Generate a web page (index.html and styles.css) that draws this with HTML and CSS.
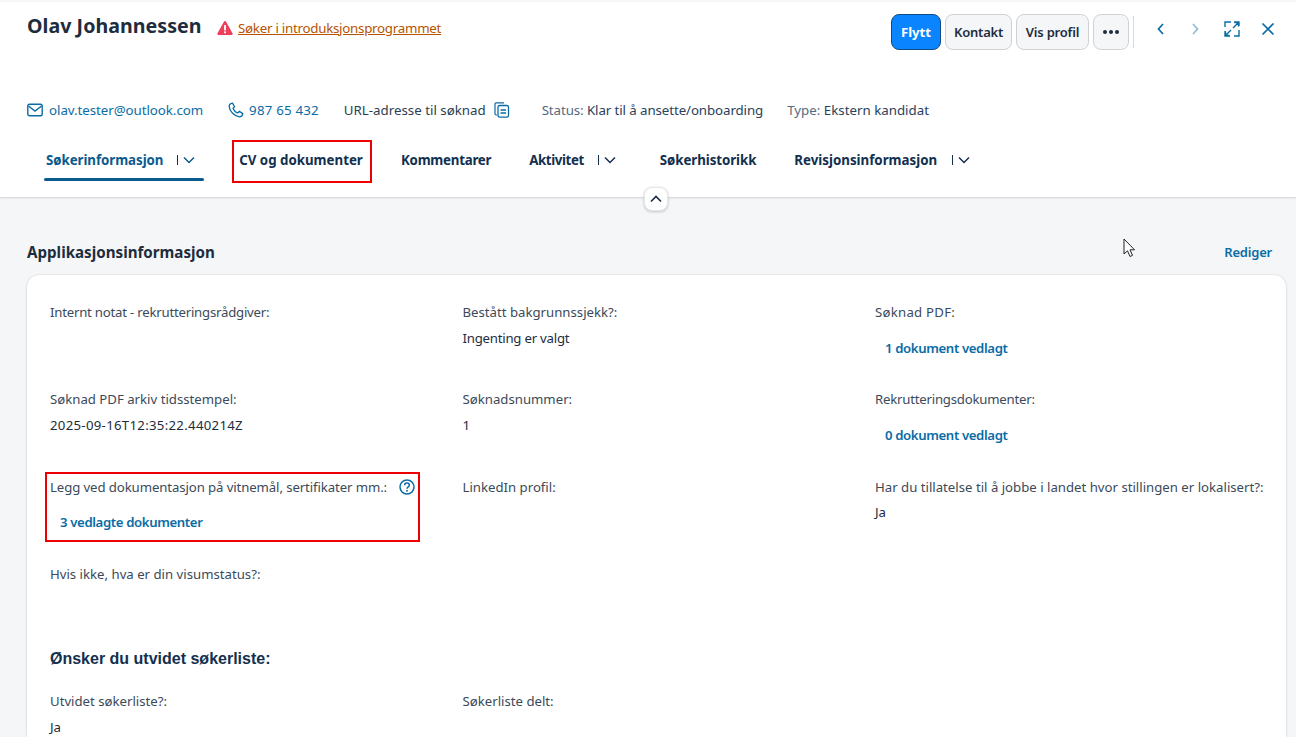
FILE: index.html
```html
<!DOCTYPE html>
<html lang="no">
<head>
<meta charset="utf-8">
<title>Olav Johannessen</title>
<link rel="stylesheet" href="styles.css">
</head>
<body>
<header class="header">
  <div class="title-row">
    <div class="title-left">
      <h1 class="name">Olav Johannessen</h1>
      <svg class="warn" viewBox="0 0 16 16" width="16" height="16"><path d="M8 1 C7.5 1 7.1 1.3 6.9 1.7 L.5 13.2 C.1 14 .6 15 1.6 15 H14.4 C15.4 15 15.9 14 15.5 13.2 L9.1 1.7 C8.9 1.3 8.5 1 8 1Z" fill="#ee3f5a"/><rect x="7.1" y="5" width="1.8" height="5.4" fill="#fff"/><rect x="7.1" y="11.4" width="1.8" height="1.8" fill="#fff"/></svg>
      <a class="warn-link">Søker i introduksjonsprogrammet</a>
    </div>
    <div class="actions">
      <button class="btn btn-primary">Flytt</button>
      <button class="btn btn-contact">Kontakt</button>
      <button class="btn btn-profile">Vis profil</button>
      <button class="btn btn-more"><span></span><span></span><span></span></button>
      <div class="sep"></div>
      <div class="nav-icons">
        <svg class="ic" viewBox="0 0 16 16"><path d="M10 3 L5.5 8 L10 13" fill="none" stroke="#0a6ca6" stroke-width="1.7"/></svg>
        <svg class="ic ic-dim" viewBox="0 0 16 16"><path d="M6 3 L10.5 8 L6 13" fill="none" stroke="#0a6ca6" stroke-width="1.7"/></svg>
        <svg class="ic ic-expand" viewBox="0 0 16 16"><path d="M1 6 V1 H7 M10 1 H15 V5 M15 9 V15 H10 M1 10 V15 H6 M9 7 L14.5 1.5 M10.5 1.5 H14.5 V5.5 M7 9 L1.5 14.500 M1.500 10.500 V14.500 H5.500" fill="none" stroke="#0a6ca6" stroke-width="1.4"/></svg>
        <svg class="ic ic-close" viewBox="0 0 16 16"><path d="M2.500 2.500 L13.500 13.500 M13.500 2.500 L2.500 13.500" fill="none" stroke="#0a6ca6" stroke-width="1.7"/></svg>
      </div>
    </div>
  </div>
  <div class="meta-row">
    <svg class="meta-ic" viewBox="0 0 16 16" width="16" height="16"><rect x=".8" y="2.300" width="14.400" height="11.400" rx="1.800" fill="none" stroke="#0a6ca6" stroke-width="1.400"/><path d="M1.500 4 L8 9 L14.500 4" fill="none" stroke="#0a6ca6" stroke-width="1.400"/></svg>
    <a class="meta-link email">olav.tester@outlook.com</a>
    <svg class="meta-ic" viewBox="0 0 16 16" width="16" height="16"><path d="M4.500 1.200 L6.500 4.600 L5 6.300 C5.600 8 7.600 10.200 9.600 11 L11.400 9.400 L14.800 11.600 C14.500 13.500 13 14.900 11.300 14.800 C6.500 14.300 1.600 9.400 1.200 4.600 C1.100 3 2.600 1.500 4.500 1.200Z" fill="none" stroke="#0a6ca6" stroke-width="1.300"/></svg>
    <a class="meta-link phone">987 65 432</a>
    <span class="meta-text url">URL-adresse til søknad</span>
    <svg class="meta-ic copy" viewBox="0 0 16 16" width="16" height="16"><path d="M3 13 H2.200 C1.500 13 1 12.500 1 11.800 V2 C1 1.300 1.500 .8 2.200 .8 H10" fill="none" stroke="#0a6ca6" stroke-width="1.200"/><rect x="4" y="3.500" width="10.500" height="11.700" rx="1.800" fill="none" stroke="#0a6ca6" stroke-width="1.300"/><path d="M6.500 8 H12 M6.500 11 H12" stroke="#0a6ca6" stroke-width="1.300"/></svg>
    <span class="meta-pair status"><span class="meta-key">Status:</span> Klar til å ansette/onboarding</span>
    <span class="meta-pair"><span class="meta-key">Type:</span> Ekstern kandidat</span>
  </div>
  <nav class="tabs">
    <div class="tab tab-active tab-first">Søkerinformasjon<i class="bar"></i><svg class="chev" viewBox="0 0 12 8"><path d="M1 1.500 L6 6.500 L11 1.500" fill="none" stroke="currentColor" stroke-width="1.500"/></svg></div>
    <div class="tab tab-marked">CV og dokumenter</div>
    <div class="tab tab-komm">Kommentarer</div>
    <div class="tab tab-akt"><span class="akt-text">Aktivitet</span><i class="bar"></i><svg class="chev" viewBox="0 0 12 8"><path d="M1 1.500 L6 6.500 L11 1.500" fill="none" stroke="currentColor" stroke-width="1.500"/></svg></div>
    <div class="tab tab-hist">Søkerhistorikk</div>
    <div class="tab tab-rev">Revisjonsinformasjon<i class="bar bar-rev"></i><svg class="chev" viewBox="0 0 12 8"><path d="M1 1.500 L6 6.500 L11 1.500" fill="none" stroke="currentColor" stroke-width="1.500"/></svg></div>
  </nav>
  <button class="collapse"><svg viewBox="0 0 12 8" width="12" height="8"><path d="M1 6.500 L6 1.500 L11 6.500" fill="none" stroke="#1d2d3e" stroke-width="1.600"/></svg></button>
</header>
<main class="main">
  <div class="section-head">
    <h2 class="section-title">Applikasjonsinformasjon</h2>
    <a class="edit">Rediger</a>
  </div>
  <section class="card">
    <div class="grid">
      <div class="field"><div class="label tight">Internt notat - rekrutteringsrådgiver:</div></div>
      <div class="field"><div class="label">Bestått bakgrunnssjekk?:</div><div class="value tight">Ingenting er valgt</div></div>
      <div class="field"><div class="label wide">Søknad PDF:</div><a class="doc">1 dokument vedlagt</a></div>
      <div class="field"><div class="label">Søknad PDF arkiv tidsstempel:</div><div class="value stamp">2025-09-16T12:35:22.440214Z</div></div>
      <div class="field"><div class="label">Søknadsnummer:</div><div class="value">1</div></div>
      <div class="field"><div class="label tight">Rekrutteringsdokumenter:</div><a class="doc">0 dokument vedlagt</a></div>
      <div class="field field-marked"><div class="label label-help">Legg ved dokumentasjon på vitnemål, sertifikater mm.:<svg class="help" viewBox="0 0 16 16" width="16" height="16"><circle cx="8" cy="8" r="7" fill="none" stroke="#0a6ca6" stroke-width="1.500"/><path d="M5.700 6.200 C5.700 3.400 10.300 3.400 10.300 6.200 C10.300 8 8 7.800 8 9.800" fill="none" stroke="#0a6ca6" stroke-width="1.500"/><rect x="7.200" y="11" width="1.600" height="1.600" fill="#0a6ca6"/></svg></div><a class="doc">3 vedlagte dokumenter</a></div>
      <div class="field"><div class="label">LinkedIn profil:</div></div>
      <div class="field"><div class="label">Har du tillatelse til å jobbe i landet hvor stillingen er lokalisert?:</div><div class="value value-near">Ja</div></div>
      <div class="field"><div class="label">Hvis ikke, hva er din visumstatus?:</div></div>
    </div>
    <h3 class="sub-title">Ønsker du utvidet søkerliste:</h3>
    <div class="grid grid-last">
      <div class="field"><div class="label">Utvidet søkerliste?:</div><div class="value">Ja</div></div>
      <div class="field"><div class="label">Søkerliste delt:</div></div>
    </div>
  </section>
</main>
<svg class="cursor" viewBox="0 0 13 20" width="13" height="20"><path d="M1 1 V16 L4.500 12.800 L7 18.500 L9.500 17.400 L7 11.800 H11.500Z" fill="#fff" stroke="#222" stroke-width="1"/></svg>
</body>
</html>
```
FILE: styles.css
```css
* { box-sizing: border-box; }
html, body { height: 100%; }
body {
  margin: 0;
  height: 737px;
  overflow: hidden;
  background: #f5f6f7;
  font-family: "Noto Sans", "Open Sans", sans-serif;
  font-size: 13.5px;
  color: #1d2d3e;
  padding-top: 2px;
}
.header {
  position: relative;
  height: 196px;
  background: #fff;
  border-bottom: 1px solid #d9dbde;
  box-shadow: 0 1px 2px rgba(0,0,0,.06);
  padding: 0 27px;
}
.title-row { display: flex; justify-content: space-between; height: 72px; }
.title-left { display: flex; align-items: flex-start; padding-top: 10px; }
.name { margin: 0; font-size: 19.6px; line-height: 27px; font-weight: 700; letter-spacing: .05px; width: 190px; }
.warn { margin-top: 8px; }
.warn-link { margin: 6px 0 0 5px; line-height: 20px; font-size: 13.3px; letter-spacing: -.25px; color: #b85300; text-decoration: underline; }
.actions { display: flex; align-items: flex-start; padding-top: 12px; margin-right: -7px; }
.btn {
  height: 36px;
  margin-right: 4px;
  padding: 0;
  border: 1px solid #cfd1d3;
  border-radius: 8px;
  background: #f5f6f7;
  color: #1d2d3e;
  font: 600 13px "Noto Sans", sans-serif;
  letter-spacing: -.2px;
}
.btn-primary { width: 50px; background: #0a84ff; border-color: #0c4c83; color: #fff; font-weight: 700; letter-spacing: 0; font-size: 13.2px; }
.btn-contact { width: 67px; }
.btn-profile { width: 73px; }
.btn-more { width: 36px; display: inline-flex; justify-content: center; align-items: center; gap: 2px; }
.btn-more span { width: 4px; height: 4px; border-radius: 50%; background: #1d2d3e; }
.sep { width: 1px; height: 32px; margin-top: 2px; background: #d9dbde; }
.nav-icons { display: flex; gap: 18px; padding: 7px 0 0 19px; }
.ic { width: 16px; height: 16px; }
.ic-dim { opacity: .45; }
.ic-expand { margin-left: 3px; }
.ic-close { margin-left: 2px; }
.meta-row { display: flex; align-items: center; height: 24px; margin-top: 24px; font-size: 13.3px; }
.meta-ic { flex: none; }
.meta-link { color: #0a6ca6; }
.email { margin: 0 25px 0 6px; letter-spacing: -.05px; }
.phone { margin: 0 25px 0 5px; letter-spacing: .2px; }
.meta-text { color: #2c3e50; }
.copy { margin-left: 8px; margin-right: 32px; }
.meta-pair { color: #29415c; }
.meta-key { color: #556b82; }
.status { margin-right: 24px; letter-spacing: -.09px; }
.tabs { display: flex; align-items: stretch; height: 43px; margin-top: 18px; font-weight: 700; font-size: 13.3px; color: #12304f; }
.tab { display: flex; align-items: center; white-space: nowrap; position: relative; padding-bottom: 3px; }
.tab-first { margin-left: 17px; width: 160px; padding-left: 2px; color: #0b5a8d; letter-spacing: -.05px; }
.tab-first::after { content: ""; position: absolute; left: 0; right: 0; bottom: 2px; height: 3px; border-radius: 2px; background: #0b5a8d; }
.tab-marked { margin-left: 28px; width: 140px; padding-right: 2px; justify-content: center; outline: 2px solid #ee0000; outline-offset: -2px; }
.tab-komm { margin-left: 29px; letter-spacing: -.25px; }
.tab-akt { margin-left: 38px; }
.akt-text { letter-spacing: -.4px; }
.tab-hist { margin-left: 44px; letter-spacing: -.07px; }
.tab-rev { margin-left: 38px; }
.bar { width: 1px; height: 10px; margin: 0 5px 0 14px; background: #12304f; }
.bar-rev { margin-left: 15px; }
.chev { width: 12px; height: 8px; }
.collapse {
  position: absolute;
  left: 644px;
  top: 185px;
  width: 24px;
  height: 24px;
  padding: 0;
  border: 1px solid #e5e5e5;
  border-radius: 8px;
  background: #fff;
  box-shadow: 0 1px 3px rgba(0,0,0,.2);
  display: flex;
  align-items: center;
  justify-content: center;
}
.main { padding: 0 10px 0 27px; }
.section-head { display: flex; justify-content: space-between; align-items: center; height: 24px; margin-top: 42px; padding-right: 14px; }
.section-title { margin: 0; font-size: 15.15px; font-weight: 700; color: #1d2d3e; }
.edit { font-weight: 600; font-size: 13px; letter-spacing: -.2px; color: #0a6ca6; }
.card {
  margin-top: 11px;
  height: 462px;
  overflow: hidden;
  padding: 25px 0 0 23px;
  background: #fff;
  border-radius: 12px 12px 0 0;
  box-shadow: 0 0 2px rgba(0,0,0,.18), 0 1px 3px rgba(0,0,0,.06);
}
.grid { display: grid; grid-template-columns: repeat(3, 412.500px); grid-auto-rows: 87.300px; }
.grid-last { grid-auto-rows: auto; }
.field { position: relative; }
.label { line-height: 24px; color: #3b4a5a; white-space: nowrap; font-size: 13.2px; }
.value { margin-top: 3px; line-height: 22px; color: #1d2d3e; white-space: nowrap; font-size: 13.2px; }
.tight { letter-spacing: -.22px; }
.wide { letter-spacing: .25px; }
.stamp { letter-spacing: .3px; }
.value-near { margin-top: 2px; }
.doc { display: block; margin: 12px 0 0 10px; line-height: 24px; font-weight: 600; letter-spacing: -.38px; color: #0a6ca6; font-size: 13.2px; }
.label-help { display: flex; align-items: center; gap: 12px; letter-spacing: -.1px; }
.field-marked .doc { margin-top: 11px; }
.field-marked::after {
  content: "";
  box-sizing: border-box;
  position: absolute;
  left: -5px;
  top: -3px;
  width: 375px;
  height: 70px;
  border: 2px solid #ee0000;
}
.sub-title { margin: -2px 0 0; height: 42px; font: 700 16px/24px "Liberation Sans", sans-serif; color: #12304f; }
.cursor { position: absolute; left: 1123px; top: 238px; }
```
